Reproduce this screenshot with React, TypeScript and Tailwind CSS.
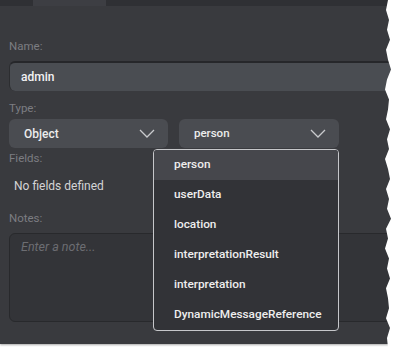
import React from "react";

const Chevron = () => (
  <svg width="16" height="9" viewBox="0 0 16 9" fill="none">
    <path d="M1 1 L8 8 L15 1" stroke="#c9cacd" strokeWidth="1.3" />
  </svg>
);

const items = [
  "person",
  "userData",
  "location",
  "interpretationResult",
  "interpretation",
  "DynamicMessageReference",
];

const edgeXs = [388, 386, 389, 387, 390, 386, 388, 391, 387, 385, 389, 388, 386, 390, 387, 389, 385, 388, 390, 386, 389, 387, 391, 386, 388, 385, 389, 387, 390, 386, 388, 389, 386, 390, 387, 388];

export default function App() {
  const step = 348 / (edgeXs.length - 1);
  const pts = edgeXs.map((x, i) => `${x},${(i * step).toFixed(1)}`).join(" ");
  const poly = `397,0 ${pts} 397,348`;
  return (
    <div
      className="relative w-[397px] h-[348px] bg-white overflow-hidden"
      style={{ fontFamily: "Roboto, 'Liberation Sans', sans-serif" }}
    >
      <div className="w-[397px] h-[344px] bg-[#393a3e] flex flex-col shadow-[0_1px_2px_rgba(0,0,0,0.35)]">
        <div className="h-[6px] bg-[#2f3034] flex">
          <div className="ml-[33px] w-[73px] h-full bg-[#3d3e43]" />
        </div>
        <div className="flex flex-col pl-[9px]">
          <div className="mt-[33px] text-[11.5px] leading-[14px] text-[#7c7d82]">Name:</div>
          <div className="mt-[8px] h-[30px] rounded-l-[6px] bg-[#4a4d52] border-t-[2px] border-[#26272a] border-l border-l-[#2c2d30] flex items-center pl-[11px] text-[12px] font-medium text-[#f2f2f2]">
            admin
          </div>
          <div className="mt-[10px] text-[11.5px] leading-[14px] text-[#7c7d82]">Type:</div>
          <div className="mt-[4px] flex gap-[11px]">
            <div className="w-[159px] h-[29px] rounded-[6px] bg-[#4a4c51] flex items-center justify-between pl-[15px] pr-[13px] text-[12px] font-medium text-[#ececec]">
              <span>Object</span>
              <Chevron />
            </div>
            <div className="w-[160px] h-[29px] rounded-[6px] bg-[#4a4c51] flex items-center justify-between pl-[15px] pr-[13px] text-[11.5px] font-medium text-[#ececec]">
              <span>person</span>
              <Chevron />
            </div>
          </div>
          <div className="mt-[3px] text-[11.5px] leading-[14px] text-[#7c7d82]">Fields:</div>
          <div className="mt-[14px] pl-[5px] text-[12px] leading-[14px] text-[#d4d4d6]">No fields defined</div>
          <div className="mt-[18px] text-[11.5px] leading-[14px] text-[#7c7d82]">Notes:</div>
          <div className="mt-[8px] h-[89px] rounded-l-[6px] bg-[#333438] border border-[#28292c] pl-[11px] pt-[4px] text-[12.5px] italic text-[#6c6d72]">
            Enter a note...
          </div>
        </div>
      </div>

      <div className="absolute left-[153px] top-[149px] w-[186px] h-[182px] rounded-[4px] border border-[#c6c7ca] bg-[#323337] flex flex-col overflow-hidden">
        {items.map((it, i) => (
          <div
            key={it}
            className={`h-[30px] flex items-center pl-[20px] text-[11.8px] font-medium text-[#eeeeee] ${i === 0 ? "bg-[#46474c]" : ""}`}
          >
            {it}
          </div>
        ))}
      </div>

      <svg className="absolute left-0 top-0" width="397" height="348">
        <polygon points={poly} fill="#ffffff" />
      </svg>
    </div>
  );
}
